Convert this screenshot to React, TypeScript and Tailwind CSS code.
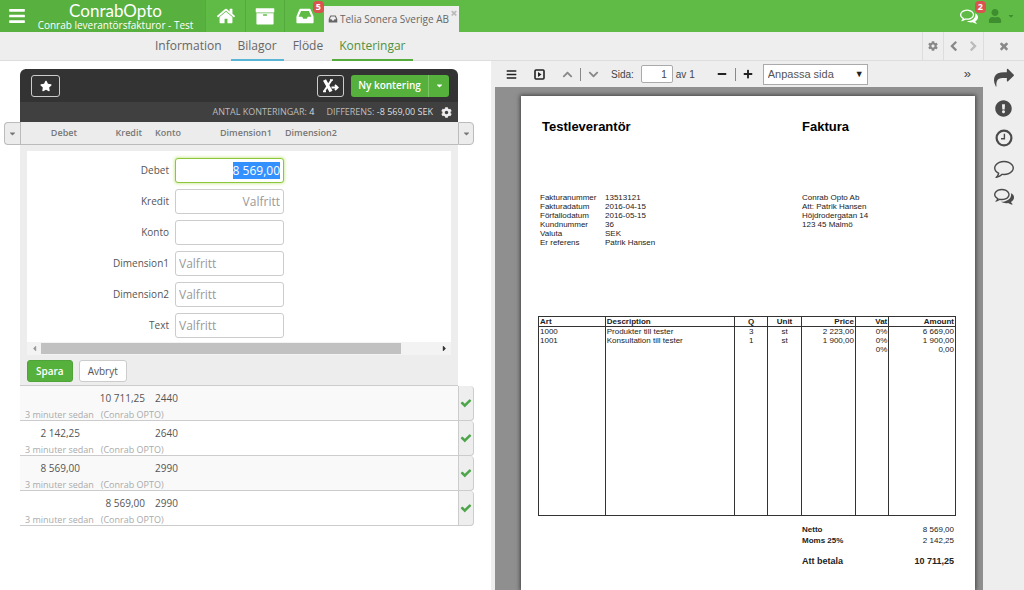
import { useEffect, useRef } from "react";
import type { ReactNode } from "react";
import {
  FaBars,
  FaCaretDown,
  FaCaretLeft,
  FaCaretRight,
  FaChevronDown,
  FaChevronUp,
  FaCog,
  FaExclamationCircle,
  FaMinus,
  FaPlus,
  FaStar,
  FaUser,
} from "react-icons/fa";

const ICONS = {
  home: "M1472 992v480q0 26-19 45t-45 19h-384v-384h-256v384h-384q-26 0-45-19t-19-45v-480q0-1 .5-3t.5-3l575-474 575 474q1 2 1 6zm223-69l-62 74q-8 9-21 11h-3q-13 0-21-7l-692-577-692 577q-12 8-24 7-13-2-21-11l-62-74q-8-10-7-23.5t11-21.5l719-599q32-26 76-26t76 26l244 204v-195q0-14 9-23t23-9h192q14 0 23 9t9 23v408l219 182q10 8 11 21.5t-7 23.5z",
  inbox:
    "M1151 960h316q-1-3-2.5-8t-2.5-8l-212-496h-708l-212 496q-1 2-2.5 8t-2.5 8h316l95 192h320zm513 30v482q0 26-19 45t-45 19h-1408q-26 0-45-19t-19-45v-482q0-62 25-123l238-552q10-25 36.5-42t52.5-17h832q26 0 52.5 17t36.5 42l238 552q25 61 25 123z",
  archive:
    "M128 192h1536q64 0 64 64v256q0 64-64 64h-1536q-64 0-64-64v-256q0-64 64-64zM128 640h1536v960q0 64-64 64h-1408q-64 0-64-64zM768 736q-64 0-64 64t64 64h256q64 0 64-64t-64-64z",
  comment:
    "M896 384q-204 0-381.5 69.5t-282 187.5-104.5 255q0 112 71.5 213.5t201.5 175.5l87 50-27 96q-24 91-70 172 152-63 275-171l43-38 57 6q69 8 130 8 204 0 381.5-69.5t282-187.5 104.5-255-104.5-255-282-187.5-381.5-69.5zm896 512q0 174-120 321.5t-326 233-450 85.5q-70 0-145-8-198 175-460 242-49 14-114 22h-5q-15 0-27-10.5t-16-27.5v-1q-3-4-.5-12t2-10 4.5-9.5l6-9 7-8.5 8-9q7-8 31-34.5t34.5-38 31-39.5 32.5-51 27-59 26-76q-157-89-247.5-220t-90.5-281q0-174 120-321.5t326-233 450-85.5 450 85.5 326 233 120 321.5z",
  comments:
    "M704 384q-153 0-286 52t-211.5 141-78.5 191q0 82 53 158t149 132l97 56-35 84q34-20 62-39l44-31 53 10q78 14 153 14 153 0 286-52t211.5-141 78.5-191-78.5-191-211.5-141-286-52zm0-128q191 0 353.5 68.5t256.5 186.5 94 257-94 257-256.5 186.5-353.5 68.5q-86 0-176-16-124 88-278 128-36 9-86 16h-3q-11 0-20.5-8t-11.5-21q-1-3-1-6.5t.5-6.5 2-6l2.5-5 3.5-5.5 4-5 4.5-5 4-4.5q5-6 23-25t26-29.5 22.5-29 25-38.5 20.5-44q-124-72-195-177t-71-224q0-139 94-257t256.5-186.5 353.5-68.5zm822 1169q10 24 20.5 44t25 38.5 22.5 29 26 29.5 23 25q1 1 4 4.5t4.5 5 4 5 3.5 5.5l2.5 5 2 6 .5 6.5-1 6.5q-3 14-13 22t-22 7q-50-7-86-16-154-40-278-128-90 16-176 16-271 0-472-132 58 4 88 4 161 0 309-45t264-129q125-92 192-212t67-254q0-77-23-152 129 71 204 178t75 230q0 120-71 224.5t-195 176.5z",
  share:
    "M1792 640q0 26-19 45l-512 512q-19 19-45 19t-45-19-19-45v-256h-224q-98 0-175.5 6t-154 21.5-133 42.5-105.5 69.5-80 101-48.5 138.5-17.5 181q0 55 5 123 0 6 2.5 23.5t2.5 26.5q0 15-8.5 25t-23.5 10q-16 0-28-17-7-9-13-22t-13.5-30-10.5-24q-127-285-127-451 0-199 53-333 162-403 875-403h224v-256q0-26 19-45t45-19 45 19l512 512q19 19 19 45z",
  chevronLeft:
    "M1427 301l-531 531 531 531q19 19 19 45t-19 45l-166 166q-19 19-45 19t-45-19l-742-742q-19-19-19-45t19-45l742-742q19-19 45-19t45 19l166 166q19 19 19 45t-19 45z",
  chevronRight:
    "M1363 877l-742 742q-19 19-45 19t-45-19l-166-166q-19-19-19-45t19-45l531-531-531-531q-19-19-19-45t19-45l166-166q19-19 45-19t45 19l742 742q19 19 19 45t-19 45z",
  times:
    "M1490 1322q0 40-28 68l-136 136q-28 28-68 28t-68-28l-294-294-294 294q-28 28-68 28t-68-28l-136-136q-28-28-28-68t28-68l294-294-294-294q-28-28-28-68t28-68l136-136q28-28 68-28t68 28l294 294 294-294q28-28 68-28t68 28l136 136q28 28 28 68t-28 68l-294 294 294 294q28 28 28 68z",
  check:
    "M1671 566q0 40-28 68l-724 724-136 136q-28 28-68 28t-68-28l-136-136-362-362q-28-28-28-68t28-68l136-136q28-28 68-28t68 28l294 295 656-657q28-28 68-28t68 28l136 136q28 28 28 68z",
};

function Icon({ name, size }: { name: keyof typeof ICONS; size: number }) {
  return (
    <svg
      viewBox="0 0 1792 1792"
      width={size}
      height={size}
      fill="currentColor"
      fillRule="evenodd"
      aria-hidden="true"
      className="shrink-0"
    >
      <path d={ICONS[name]} />
    </svg>
  );
}

function ClockIcon() {
  return (
    <svg viewBox="0 0 18 18" width="18" height="18" fill="none" stroke="currentColor" aria-hidden="true">
      <circle cx="9" cy="9" r="7.4" strokeWidth="2.2" />
      <path d="M9.4 4.8v5H6" strokeWidth="1.4" />
    </svg>
  );
}

function ExportIcon() {
  return (
    <svg viewBox="0 0 18 14" width="18" height="14" fill="none" stroke="currentColor" aria-hidden="true">
      <path d="M2.500 1l6.500 11.500" strokeWidth="3.4" />
      <path d="M9.500 1L2 12.500" strokeWidth="2" />
      <path d="M1 12.500h3M8 1h3" strokeWidth="1.400" />
      <path d="M9.500 8.500h6M13 5.800l2.700 2.700L13 11.200" strokeWidth="1.800" />
    </svg>
  );
}

function PresentIcon() {
  return (
    <svg viewBox="0 0 11 11" width="11" height="11" aria-hidden="true">
      <rect x="1" y="1" width="9" height="9" rx="1" fill="none" stroke="currentColor" strokeWidth="1.6" />
      <path d="M4 3l3.500 2.500L4 8z" fill="currentColor" />
    </svg>
  );
}

function Badge({ children }: { children: ReactNode }) {
  return (
    <span className="absolute right-0 top-px rounded-sm bg-[#d9534f] px-[3px] text-[9px] font-bold leading-3 text-white">
      {children}
    </span>
  );
}

const tabs = [
  { label: "Information", className: "border-transparent" },
  { label: "Bilagor", className: "border-[#5bb5d6]" },
  { label: "Flöde", className: "border-transparent" },
  { label: "Konteringar", className: "border-[#56ad3e] text-[#4f9140]" },
];

const fields = [
  { id: "kredit", label: "Kredit", placeholder: "Valfritt", right: true },
  { id: "konto", label: "Konto", placeholder: "", right: false },
  { id: "dimension1", label: "Dimension1", placeholder: "Valfritt", right: false },
  { id: "dimension2", label: "Dimension2", placeholder: "Valfritt", right: false },
  { id: "text", label: "Text", placeholder: "Valfritt", right: false },
];

const entries = [
  { debet: "", kredit: "10 711,25", konto: "2440" },
  { debet: "2 142,25", kredit: "", konto: "2640" },
  { debet: "8 569,00", kredit: "", konto: "2990" },
  { debet: "", kredit: "8 569,00", konto: "2990" },
];

const invoiceInfo = [
  ["Fakturanummer", "13513121"],
  ["Fakturadatum", "2016-04-15"],
  ["Förfallodatum", "2016-05-15"],
  ["Kundnummer", "36"],
  ["Valuta", "SEK"],
  ["Er referens", "Patrik Hansen"],
];

const invoiceRows = [
  ["1000", "Produkter till tester", "3", "st", "2 223,00", "0%", "6 669,00"],
  ["1001", "Konsultation till tester", "1", "st", "1 900,00", "0%", "1 900,00"],
  ["", "", "", "", "", "0%", "0,00"],
];

const invoiceAlign = ["text-left", "text-left", "text-center", "text-center", "text-right", "text-right", "text-right"];

function TopBar() {
  return (
    <header className="flex h-8 bg-[#60bb46] text-white">
      <div className="flex w-[205px] items-center bg-[#58b03f] pl-2">
        <button type="button" aria-label="Meny">
          <FaBars size={18} />
        </button>
        <div className="flex flex-1 flex-col items-center">
          <span className="font-[Lato] text-[17px] leading-[19px]">ConrabOpto</span>
          <span className="whitespace-nowrap text-[10px] font-medium leading-[11px]">
            Conrab leverantörsfakturor - Test
          </span>
        </div>
      </div>
      <button type="button" aria-label="Hem" className="flex w-10 items-center justify-center border-l border-[#55aa3e]">
        <Icon name="home" size={20} />
      </button>
      <button type="button" aria-label="Arkiv" className="flex w-[39px] items-center justify-center border-l border-[#55aa3e]">
        <Icon name="archive" size={20} />
      </button>
      <button
        type="button"
        aria-label="Inkorg"
        className="relative flex w-10 items-center justify-center border-l border-[#55aa3e]"
      >
        <Icon name="inbox" size={20} />
        <Badge>5</Badge>
      </button>
      <div className="relative mt-[6px] flex w-[135px] items-center gap-[2px] bg-[#eee] pl-1 text-[10px] text-[#666]">
        <Icon name="inbox" size={10} />
        <a href="#telia" className="whitespace-nowrap">
          Telia Sonera Sverige AB
        </a>
        <button type="button" aria-label="Stäng flik" className="absolute right-px top-[3px] text-[#bbb]">
          <Icon name="times" size={8} />
        </button>
      </div>
      <div className="ml-auto flex items-center pr-[9px]">
        <button type="button" aria-label="Meddelanden" className="relative flex h-8 w-[26px] items-center">
          <Icon name="comments" size={18} />
          <Badge>2</Badge>
        </button>
        <button type="button" aria-label="Användare" className="ml-[2px] flex items-center gap-[5px] text-[#3e8e2f]">
          <FaUser size={14} />
          <FaCaretDown size={8} />
        </button>
      </div>
    </header>
  );
}

function SubNav() {
  return (
    <nav className="flex h-[29px] border-b border-[#ddd] bg-[#eee] text-[12px] text-[#666]">
      <div className="flex gap-[2px] pl-[148px]">
        {tabs.map((tab) => (
          <a
            key={tab.label}
            href={"#" + tab.label.toLowerCase()}
            className={"h-[29px] border-b-2 px-[7px] leading-[28px] " + tab.className}
          >
            {tab.label}
          </a>
        ))}
      </div>
      <div className="ml-auto flex text-[#888]">
        <button type="button" aria-label="Inställningar" className="flex w-[21px] items-center justify-center border-l border-[#ddd]">
          <FaCog size={10} />
        </button>
        <button type="button" aria-label="Föregående" className="flex w-5 items-center justify-center border-l border-[#ddd]">
          <Icon name="chevronLeft" size={11} />
        </button>
        <button type="button" aria-label="Nästa" className="flex w-5 items-center justify-center text-[#bbb]">
          <Icon name="chevronRight" size={11} />
        </button>
        <button type="button" aria-label="Stäng" className="flex w-[41px] items-center justify-center border-l border-[#ddd]">
          <Icon name="times" size={12} />
        </button>
      </div>
    </nav>
  );
}

function EntryForm() {
  const debet = useRef<HTMLInputElement>(null);

  useEffect(() => {
    debet.current?.focus();
    debet.current?.select();
  }, []);

  return (
    <form className="px-[7px] pb-[3px] pt-[6px]">
      <div className="flex flex-col gap-[6px] bg-white pb-[4px] pt-[7px]">
        <div className="flex items-center gap-[6px]">
          <label htmlFor="debet" className="w-[142px] text-right text-[10px] text-[#555]">
            Debet
          </label>
          <input
            ref={debet}
            id="debet"
            defaultValue="8 569,00"
            className="h-[25px] w-[109px] rounded-[3px] border border-[#8cc63f] bg-white px-[3px] text-right text-[12px] text-[#555] shadow-[0_0_3px_1px_#d3efa5] outline-none selection:bg-[#3390ff] selection:text-white"
          />
        </div>
        {fields.map((field) => (
          <div key={field.id} className="flex items-center gap-[6px]">
            <label htmlFor={field.id} className="w-[142px] text-right text-[10px] text-[#555]">
              {field.label}
            </label>
            <input
              id={field.id}
              placeholder={field.placeholder}
              className={
                "h-[25px] w-[109px] rounded-[3px] border border-[#ccc] bg-white px-[3px] text-[12px] placeholder:text-[#999] " +
                (field.right ? "text-right" : "text-left")
              }
            />
          </div>
        ))}
      </div>
      <div className="flex h-[13px] items-center bg-[#f3f3f3]">
        <span className="flex w-[14px] justify-center text-[#999]">
          <FaCaretLeft size={9} />
        </span>
        <div className="flex h-[11px] flex-1">
          <div className="w-[91%] bg-[#c1c1c1]" />
        </div>
        <span className="flex w-[14px] justify-center text-[#333]">
          <FaCaretRight size={9} />
        </span>
      </div>
      <div className="flex gap-[6px] pt-[5px] text-[10px]">
        <button type="button" className="h-[22px] rounded-[3px] border border-[#4fa338] bg-[#56b13c] px-2 font-semibold text-white">
          Spara
        </button>
        <button type="button" className="h-[22px] rounded-[3px] border border-[#ccc] bg-white px-2 text-[#555]">
          Avbryt
        </button>
      </div>
    </form>
  );
}

function Entries() {
  return (
    <section className="px-1 pt-2">
      <div className="mx-4 rounded-t-[6px] bg-[#333] text-white">
        <div className="flex h-[33px] items-center pl-[11px] pr-[9px]">
          <button
            type="button"
            aria-label="Favorit"
            className="flex h-[22px] w-[29px] items-center justify-center rounded-[3px] border border-[#ccc]"
          >
            <FaStar size={12} />
          </button>
          <button
            type="button"
            aria-label="Exportera"
            className="ml-auto flex h-[22px] w-[27px] items-center justify-center rounded-[3px] border border-[#ccc]"
          >
            <ExportIcon />
          </button>
          <div className="ml-[7px] flex h-[22px] rounded-[3px] bg-[#56b13c]">
            <button type="button" className="w-[77px] whitespace-nowrap text-[10px] font-semibold">
              Ny kontering
            </button>
            <button type="button" aria-label="Fler val" className="flex w-[21px] items-center justify-center border-l border-[#7cc666]">
              <FaCaretDown size={9} />
            </button>
          </div>
        </div>
        <div className="flex h-5 items-center justify-end gap-3 bg-[#404040] pr-[6px] text-[9px] text-[#bbb]">
          <span>
            ANTAL KONTERINGAR: <span className="text-[#ddd]">4</span>
          </span>
          <span className="-mr-1">
            DIFFERENS: <span className="text-[#ddd]">-8 569,00 SEK</span>
          </span>
          <button type="button" aria-label="Inställningar" className="text-[#eee]">
            <FaCog size={11} />
          </button>
        </div>
      </div>
      <table className="w-full table-fixed border-separate border-spacing-0 text-[10px] text-[#555]">
        <colgroup>
          <col className="w-4" />
          <col className="w-[60px]" />
          <col className="w-[65px]" />
          <col className="w-[66px]" />
          <col className="w-[65px]" />
          <col />
          <col className="w-4" />
        </colgroup>
        <thead>
          <tr className="h-[23px] text-[9px] text-[#777] [&>th]:border-b [&>th]:border-[#bbb] [&>th]:bg-[#ececec] [&>th]:font-semibold">
            <th className="rounded-l-[4px] border-l border-t">
              <button type="button" aria-label="Visa alla" className="flex w-full justify-center">
                <FaCaretDown size={9} />
              </button>
            </th>
            <th className="border-l pr-[3px] text-right">Debet</th>
            <th className="pr-[3px] text-right">Kredit</th>
            <th className="pl-[10px] text-left">Konto</th>
            <th className="pl-[9px] text-left">Dimension1</th>
            <th className="pl-[9px] text-left">Dimension2</th>
            <th className="rounded-r-[4px] border-l border-r border-t">
              <button type="button" aria-label="Kolumner" className="flex w-full justify-center">
                <FaCaretDown size={9} />
              </button>
            </th>
          </tr>
        </thead>
        <tbody>
          <tr>
            <td />
            <td colSpan={5} className="border-b border-[#ccc] bg-[#ededed] p-0">
              <EntryForm />
            </td>
            <td />
          </tr>
        </tbody>
        {entries.map((entry, i) => (
          <tbody key={i} className={i % 2 === 0 ? "[&_td.line]:bg-[#f9f9f9]" : ""}>
            <tr className="h-[23px]">
              <td rowSpan={2} />
              <td className="line p-0 text-right leading-4">{entry.debet}</td>
              <td className="line p-0 text-right leading-4">{entry.kredit}</td>
              <td className="line p-0 pl-[10px] leading-4">{entry.konto}</td>
              <td className="line" />
              <td className="line" />
              <td rowSpan={2} className="rounded-r-[4px] border border-t-0 border-[#ccc] bg-[#eee] p-0">
                <span className="flex justify-center text-[#4ea64b]">
                  <Icon name="check" size={12} />
                </span>
              </td>
            </tr>
            <tr className="h-3">
              <td colSpan={5} className="line whitespace-pre border-b border-[#ccc] p-0 pl-[5px] text-[9px] leading-[11px] text-[#aaa]">
                {"3 minuter sedan   (Conrab OPTO)"}
              </td>
            </tr>
          </tbody>
        ))}
      </table>
    </section>
  );
}

function ViewerToolbar() {
  return (
    <div className="flex h-[26px] items-center pl-[11px] pr-3 font-['Liberation_Sans'] text-[10px] text-[#444]">
      <button type="button" aria-label="Sidopanel" className="text-[#222]">
        <FaBars size={11} />
      </button>
      <button type="button" aria-label="Presentation" className="ml-[17px] text-[#222]">
        <PresentIcon />
      </button>
      <button type="button" aria-label="Föregående sida" className="ml-[17px] text-[#888]">
        <FaChevronUp size={11} />
      </button>
      <span className="ml-[7px] h-[13px] w-px bg-[#888]" />
      <button type="button" aria-label="Nästa sida" className="ml-[7px] text-[#888]">
        <FaChevronDown size={11} />
      </button>
      <label htmlFor="page" className="ml-3">
        Sida:
      </label>
      <input
        id="page"
        defaultValue="1"
        className="ml-[7px] h-[18px] w-8 rounded-[2px] border border-[#aaa] bg-white pr-[5px] text-right"
      />
      <span className="ml-[3px]">av 1</span>
      <button type="button" aria-label="Zooma ut" className="ml-[22px] text-[#222]">
        <FaMinus size={10} />
      </button>
      <span className="ml-[8px] h-[13px] w-px bg-[#888]" />
      <button type="button" aria-label="Zooma in" className="ml-[7px] text-[#222]">
        <FaPlus size={10} />
      </button>
      <div className="relative ml-[10px]">
        <select
          aria-label="Zoom"
          className="h-[21px] w-[105px] appearance-none border border-[#aaa] bg-white pl-1 text-[11px] text-[#555]"
        >
          <option>Anpassa sida</option>
        </select>
        <span className="pointer-events-none absolute right-1 top-[2px] text-[9px] leading-4 text-[#222]">▼</span>
      </div>
      <button type="button" aria-label="Verktyg" className="ml-auto text-[13px] leading-4">
        »
      </button>
    </div>
  );
}

function Invoice() {
  return (
    <article className="flex-1 bg-white pl-[17px] pr-[19px] font-['Liberation_Sans'] text-[8px] leading-[9px] text-[#222] shadow-[0_0_4px_1px_#444]">
      <div className="grid grid-cols-[264fr_154fr] pt-[22px] text-[13px] font-bold leading-[18px] text-black">
        <h1 className="pl-1">Testleverantör</h1>
        <h1>Faktura</h1>
      </div>
      <div className="grid grid-cols-[264fr_154fr] pt-[57px]">
        <dl className="grid grid-cols-[65px_1fr] gap-x-0 pl-[2px]">
          {invoiceInfo.map(([name, value]) => (
            <div key={name} className="contents">
              <dt>{name}</dt>
              <dd>{value}</dd>
            </div>
          ))}
        </dl>
        <address className="not-italic">
          Conrab Opto Ab
          <br />
          Att: Patrik Hansen
          <br />
          Höjdrodergatan 14
          <br />
          123 45 Malmö
        </address>
      </div>
      <table className="mt-[69px] w-full table-fixed border-collapse border border-[#333]">
        <colgroup>
          <col className="w-[16%]" />
          <col className="w-[31%]" />
          <col className="w-[8%]" />
          <col className="w-[8%]" />
          <col className="w-[13%]" />
          <col className="w-[8%]" />
          <col className="w-[16%]" />
        </colgroup>
        <thead>
          <tr className="border-b border-[#333]">
            {["Art", "Description", "Q", "Unit", "Price", "Vat", "Amount"].map((name, i) => (
              <th key={name} className={"border-x border-[#333] p-0 px-px font-bold " + invoiceAlign[i]}>
                {name}
              </th>
            ))}
          </tr>
        </thead>
        <tbody>
          {invoiceRows.map((row, r) => (
            <tr key={r}>
              {row.map((cell, i) => (
                <td key={i} className={"border-x border-[#333] p-0 px-px " + invoiceAlign[i]}>
                  {cell}
                </td>
              ))}
            </tr>
          ))}
          <tr className="h-[161px]">
            {invoiceAlign.map((_, i) => (
              <td key={i} className="border-x border-[#333]" />
            ))}
          </tr>
        </tbody>
      </table>
      <div className="grid grid-cols-[264fr_154fr] pt-[8px]">
        <dl className="col-start-2 grid grid-cols-2 pr-[2px] leading-[11px]">
          <dt className="font-bold">Netto</dt>
          <dd className="text-right">8 569,00</dd>
          <dt className="font-bold">Moms 25%</dt>
          <dd className="text-right">2 142,25</dd>
          <dt className="pt-[10px] text-[9px] font-bold">Att betala</dt>
          <dd className="pt-[10px] text-right text-[9px] font-bold">10 711,25</dd>
        </dl>
      </div>
    </article>
  );
}

function SideBar() {
  return (
    <aside className="flex flex-col items-center bg-[#eee] pt-[2px] text-[#4a4a4a]">
      <button type="button" aria-label="Vidarebefordra" className="flex h-[30px] items-center">
        <Icon name="share" size={20} />
      </button>
      <button type="button" aria-label="Viktigt" className="flex h-[30px] items-center">
        <FaExclamationCircle size={17} />
      </button>
      <button type="button" aria-label="Historik" className="flex h-[30px] items-center">
        <ClockIcon />
      </button>
      <button type="button" aria-label="Kommentar" className="flex h-[30px] items-center">
        <Icon name="comment" size={20} />
      </button>
      <button type="button" aria-label="Konversation" className="flex h-[26px] items-center">
        <Icon name="comments" size={20} />
      </button>
    </aside>
  );
}

export default function App() {
  return (
    <div className="flex min-h-screen flex-col bg-white font-['Open_Sans',sans-serif]">
      <TopBar />
      <SubNav />
      <main className="grid flex-1 grid-cols-[minmax(0,495fr)_minmax(0,488fr)_41px]">
        <div className="border-r-4 border-[#eee] pr-[13px]">
          <Entries />
        </div>
        <section className="flex flex-col bg-[#eee]">
          <ViewerToolbar />
          <div className="flex flex-1 flex-col overflow-hidden bg-[#8f8f8f] pl-[26px] pr-2 pt-[9px]">
            <Invoice />
          </div>
        </section>
        <SideBar />
      </main>
    </div>
  );
}
